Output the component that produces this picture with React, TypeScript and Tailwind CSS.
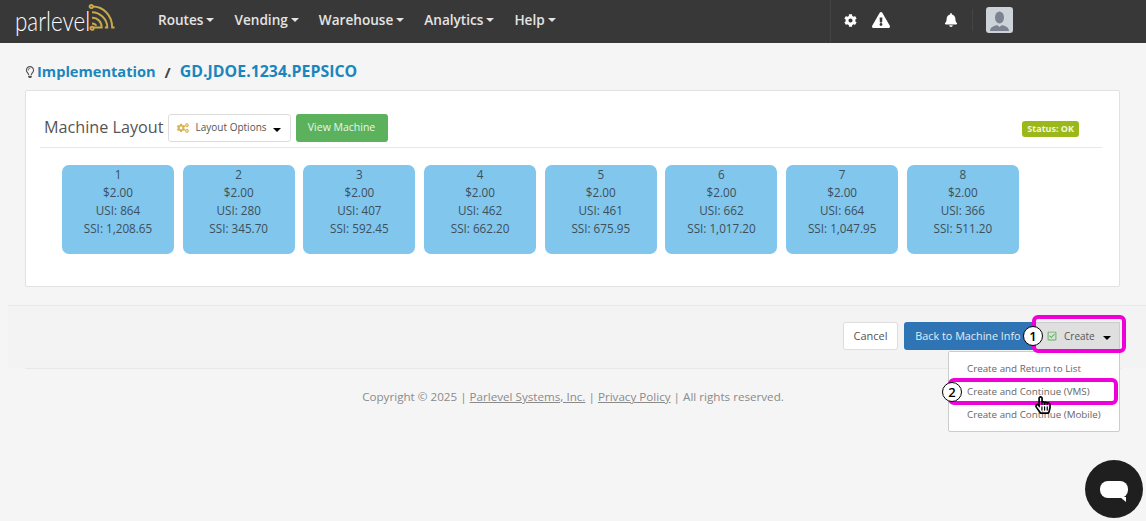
import React from 'react';
import { FaBell, FaCog, FaCogs, FaExclamationTriangle, FaRegCheckSquare, FaRegHandPointer, FaRegLightbulb } from 'react-icons/fa';

const navItems = ['Routes', 'Vending', 'Warehouse', 'Analytics', 'Help'];

const slots = [
  { id: 1, usi: '864', ssi: '1,208.65' },
  { id: 2, usi: '280', ssi: '345.70' },
  { id: 3, usi: '407', ssi: '592.45' },
  { id: 4, usi: '462', ssi: '662.20' },
  { id: 5, usi: '461', ssi: '675.95' },
  { id: 6, usi: '662', ssi: '1,017.20' },
  { id: 7, usi: '664', ssi: '1,047.95' },
  { id: 8, usi: '366', ssi: '511.20' },
];

const Caret = ({ className }: { className: string }) => (
  <span className={`inline-block w-0 h-0 border-x-[4px] border-x-transparent border-t-[4px] ${className}`} />
);

const Logo = () => (
  <div className="flex items-start w-[102px] h-[36px] ml-[15px] mb-[5px]">
    <span className="inline-block w-[73px] mt-[4px] origin-left scale-x-[0.8] text-[28px] leading-[30px] font-light text-white font-['Lato',sans-serif]">parlevel</span>
    <svg width="29" height="32" viewBox="0 0 36 36" fill="none" stroke="#c9a94a" strokeWidth="2.400">
      <circle cx="4" cy="5" r="2" />
      <circle cx="5" cy="32" r="2" />
      <path d="M6 5c13 0 24 11 24 26h3" />
      <path d="M5 12c10 0 19 9 19 19h-3" />
      <path d="M5 19c7 0 12 5 12 12H7" />
      <path d="M5 26c3 0 5 2 5 3" />
    </svg>
  </div>
);

const Header = () => (
  <header className="h-[43px] bg-[#383838] flex items-center shrink-0">
    <Logo />
    <nav className="flex items-center gap-[20px] ml-[41px] mb-[3px] text-[13.600px] font-semibold text-[#e4e4e4]">
      {navItems.map(item => (
        <span key={item} className="flex items-center gap-[3px]">
          {item}
          <Caret className="border-t-[#e4e4e4]" />
        </span>
      ))}
    </nav>
    <div className="ml-auto mr-[133px] flex items-center h-full w-[183px] border-l border-[#444444]">
      <FaCog size={13} className="ml-[13px] mb-[3px] text-white" />
      <FaExclamationTriangle size={18} className="ml-[15px] mb-[4px] text-white" />
      <FaBell size={14} className="ml-[54px] mb-[3px] text-white" />
      <div className="ml-[14px] w-px h-[22px] mb-[3px] bg-[#444444]" />
      <div className="ml-[13px] mb-[3px] w-[27px] h-[26px] rounded-[3px] bg-[#ced2d9] overflow-hidden flex items-end justify-center">
        <svg width="23" height="23" viewBox="0 0 23 23" fill="#7d8290">
          <ellipse cx="11.5" cy="7.5" rx="4.5" ry="6" />
          <path d="M2 21c0-4 4-5 7-6l2.500 2 2.500-2c3 1 7 2 7 6z" />
        </svg>
      </div>
    </div>
  </header>
);

const SlotTile = ({ slot }: { slot: (typeof slots)[number] }) => (
  <div className="w-[112px] h-[89px] rounded-[7px] bg-[#81c6ec] text-center text-[11.700px] leading-[18px] text-[#3d4f5c]">
    <div>{slot.id}</div>
    <div>$2.00</div>
    <div>USI: {slot.usi}</div>
    <div>SSI: {slot.ssi}</div>
  </div>
);

const Card = () => (
  <section className="-mt-[1px] ml-[25px] mr-[26px] h-[197px] bg-white border border-[#e2e2e2] rounded-[2px] pl-[14px] pr-[17px] pt-[20px]">
    <div className="flex items-center h-[33px]">
      <h2 className="ml-[4px] mb-[2px] text-[16.200px] leading-[28px] text-[#555555]">Machine Layout</h2>
      <button className="ml-[4px] h-[28px] w-[123px] bg-white border border-[#dddddd] rounded-[3px] flex items-center pl-[8px] text-[10px] text-[#555555]">
        <FaCogs size={12} className="text-[#d8b24e]" />
        <span className="ml-[7px]">Layout Options</span>
        <Caret className="ml-[6px] mt-[4px] border-t-black" />
      </button>
      <button className="ml-[5px] h-[28px] w-[92px] bg-[#5cb25c] rounded-[3px] text-[10.500px] text-[#e8f5e8]">View Machine</button>
      <span className="ml-auto mr-[23px] mt-[2px] h-[16px] px-[5px] rounded-[3px] bg-[#9bb81a] text-[9px] leading-[16px] font-bold text-[#f2f6dc]">Status: OK</span>
    </div>
    <div className="mt-[3px] h-px bg-[#e8e8e8]" />
    <div className="flex gap-[8.700px] mt-[17px] ml-[22px]">
      {slots.map(slot => <SlotTile key={slot.id} slot={slot} />)}
    </div>
  </section>
);

const ActionBar = () => (
  <div className="mt-[18px] ml-[8px] h-[63px] border-t border-[#e9e9e9] bg-[#f3f3f3] flex justify-end items-start pt-[16px] pr-[26px]">
    <button className="h-[28px] w-[55px] bg-white border border-[#dddddd] rounded-[3px] text-[11px] text-[#555555]">Cancel</button>
    <button className="ml-[6px] h-[28px] w-[130px] pr-[2px] bg-[#2f74b5] rounded-l-[3px] text-[10.800px] text-[#e3edf6] text-center">Back to Machine Info</button>
    <button className="h-[28px] w-[86px] bg-[#dfdfdf] border border-[#cccccc] flex items-center pl-[12px] text-[10px] text-[#555555]">
      <FaRegCheckSquare size={10} className="text-[#5cb25c]" />
      <span className="ml-[7px]">Create</span>
      <Caret className="ml-[8px] mt-[4px] border-t-black" />
    </button>
  </div>
);

const Footer = () => (
  <footer className="mx-[25px] border-t border-[#e8e8e8] pt-[19px] text-center text-[11.650px] leading-[17px] text-[#8a8a8a]">
    Copyright © 2025 | <span className="underline">Parlevel Systems, Inc.</span> | <span className="underline">Privacy Policy</span> | All rights reserved.
  </footer>
);

const DropdownMenu = () => (
  <div className="absolute left-[948px] top-[351px] w-[172px] h-[81px] bg-white border border-[#cccccc] rounded-[2px] pl-[18px] pt-[5px] text-[9.800px] leading-[23px] text-[#666666]">
    <div>Create and Return to List</div>
    <div>Create and Continue (VMS)</div>
    <div>Create and Continue (Mobile)</div>
  </div>
);

const StepBadge = ({ n, className }: { n: number; className: string }) => (
  <div className={`absolute w-[20px] h-[20px] rounded-full bg-white border border-black text-[13px] leading-[18px] font-semibold text-center text-black ${className}`}>{n}</div>
);

const Annotations = () => (
  <>
    <div className="absolute left-[1032px] top-[315px] w-[94px] h-[38px] border-[4px] border-[#f000d8] rounded-[6px]" />
    <div className="absolute left-[948px] top-[378px] w-[170px] h-[27px] border-[4px] border-[#f000d8] rounded-[6px]" />
    <StepBadge n={1} className="left-[1023px] top-[326px]" />
    <StepBadge n={2} className="left-[942px] top-[382px]" />
    <div className="absolute left-[1034px] top-[396px] text-black">
      <FaRegHandPointer size={18} />
    </div>
  </>
);

const ChatBubble = () => (
  <div className="absolute left-[1085px] top-[460px] w-[58px] h-[58px] rounded-full bg-[#1f1f1f] flex items-center justify-center">
    <div className="relative w-[28px] h-[17px] rounded-[8px] bg-white">
      <div className="absolute right-[2px] bottom-[-4px] w-0 h-0 border-l-[6px] border-l-transparent border-t-[5px] border-t-white" />
    </div>
  </div>
);

export default function App() {
  return (
    <div className="relative w-[1146px] h-[521px] overflow-hidden bg-[#f5f5f5] font-['Open_Sans',sans-serif] flex flex-col">
      <Header />
      <div className="flex items-center h-[38px] ml-[24px] mt-[10px] font-bold text-[#1b86bd]">
        <FaRegLightbulb size={12} className="text-[#555555]" />
        <span className="ml-[1px] text-[14.600px]">Implementation</span>
        <span className="mx-[9px] text-[15px] text-[#444444]">/</span>
        <span className="text-[15.900px]">GD.JDOE.1234.PEPSICO</span>
      </div>
      <Card />
      <ActionBar />
      <Footer />
      <DropdownMenu />
      <Annotations />
      <ChatBubble />
    </div>
  );
}
